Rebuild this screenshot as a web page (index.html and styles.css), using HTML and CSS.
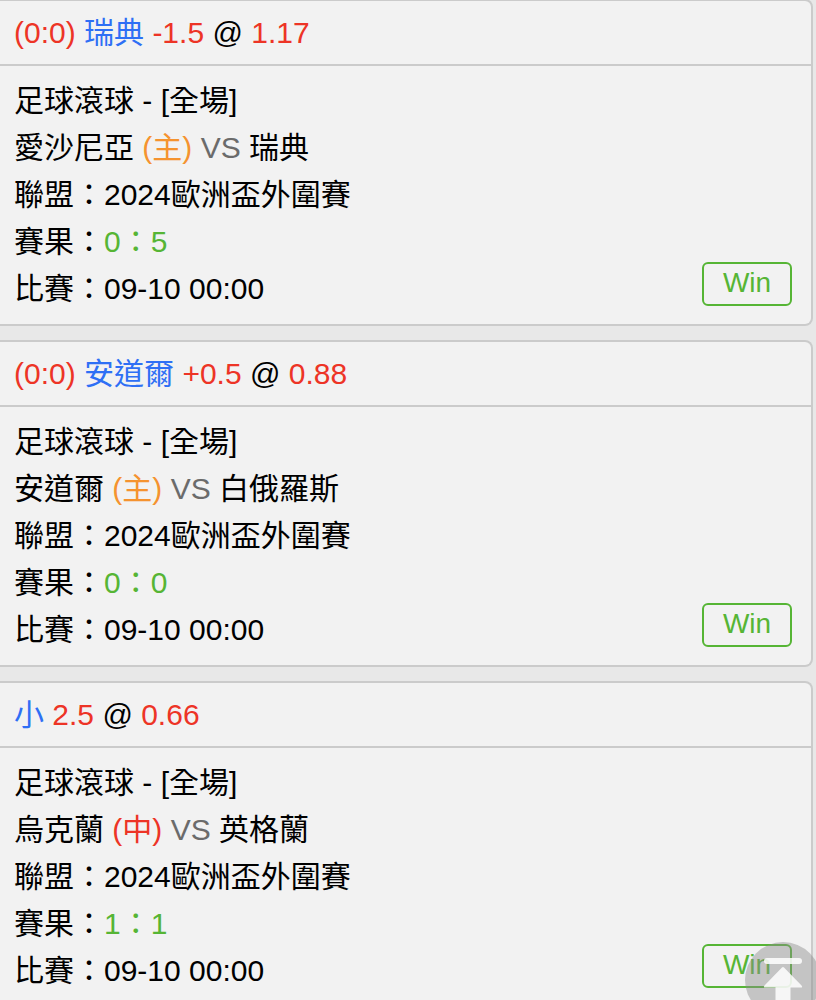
FILE: index.html
```html
<!DOCTYPE html>
<html lang="zh-Hant">
<head>
<meta charset="UTF-8">
<meta name="viewport" content="width=device-width, initial-scale=1.0">
<title>投注記錄</title>
<link rel="stylesheet" href="styles.css">
</head>
<body>
<div class="list">
    <div class="card">
        <div class="card-head">
            <span class="red">(0:0)</span> <span class="blue">瑞典</span> <span class="red">-1.5</span> @ <span class="red">1.17</span>
        </div>
        <div class="card-body">
            <div class="info">
                <p>足球滾球 - [全場]</p>
                <p>愛沙尼亞 <span class="orange">(主)</span> <span class="gray">VS</span> 瑞典</p>
                <p>聯盟：2024歐洲盃外圍賽</p>
                <p>賽果：<span class="green">0：5</span></p>
                <p>比賽：09-10 00:00</p>
            </div>
            <span class="tag">Win</span>
        </div>
    </div>

    <div class="card">
        <div class="card-head">
            <span class="red">(0:0)</span> <span class="blue">安道爾</span> <span class="red">+0.5</span> @ <span class="red">0.88</span>
        </div>
        <div class="card-body">
            <div class="info">
                <p>足球滾球 - [全場]</p>
                <p>安道爾 <span class="orange">(主)</span> <span class="gray">VS</span> 白俄羅斯</p>
                <p>聯盟：2024歐洲盃外圍賽</p>
                <p>賽果：<span class="green">0：0</span></p>
                <p>比賽：09-10 00:00</p>
            </div>
            <span class="tag">Win</span>
        </div>
    </div>

    <div class="card">
        <div class="card-head">
            <span class="blue">小</span> <span class="red">2.5</span> @ <span class="red">0.66</span>
        </div>
        <div class="card-body">
            <div class="info">
                <p>足球滾球 - [全場]</p>
                <p>烏克蘭 <span class="red">(中)</span> <span class="gray">VS</span> 英格蘭</p>
                <p>聯盟：2024歐洲盃外圍賽</p>
                <p>賽果：<span class="green">1：1</span></p>
                <p>比賽：09-10 00:00</p>
            </div>
            <span class="tag">Win</span>
        </div>
    </div>
</div>

<button class="go-top" type="button" aria-label="回到頂部" onclick="window.scrollTo(0, 0)">
    <svg viewBox="0 0 76 76" width="76" height="76" fill="#fff" fill-opacity="0.85">
        <rect x="19" y="16" width="38" height="6" rx="3"/>
        <path d="M37 25.500Q38 24.500 39 25.500L56.500 43.500Q58 45.500 56 45.500H45.500V64H30.500V45.500H20Q18 45.500 19.500 43.500Z"/>
    </svg>
</button>
</body>
</html>
```

FILE: styles.css
```css
* {
    box-sizing: border-box;
}

html {
    scrollbar-width: none;
}

body {
    margin: 0;
    background: #e8e8e8;
    color: #000;
    font-family: "Liberation Sans", "Noto Sans CJK TC", sans-serif;
    font-size: 30px;
    line-height: 47px;
}

.list {
    display: flex;
    flex-direction: column;
    gap: 14px;
    margin-top: -1px;
    padding-right: 3px;
}

.card {
    background: #f2f2f2;
    border: 2px solid #cbcbcb;
    border-left: 0;
    border-radius: 0 8px 8px 0;
}

.card-head {
    padding: 8px 14px;
    border-bottom: 2px solid #cbcbcb;
}

.card-body {
    display: flex;
    justify-content: space-between;
    align-items: flex-end;
    padding: 11px 19px 12px 14px;
}

.info p {
    margin: 0;
}

.tag {
    width: 90px;
    margin-bottom: 6px;
    padding-bottom: 2px;
    border: 2px solid #56b535;
    border-radius: 6px;
    color: #56b535;
    font-size: 28px;
    line-height: 38px;
    text-align: center;
}

.red {
    color: #ed3426;
}

.blue {
    color: #2e6ff5;
}

.orange {
    color: #f5932f;
}

.gray {
    color: #6b6b6b;
}

.green {
    color: #56b535;
}

.go-top {
    position: fixed;
    right: -5px;
    bottom: -18px;
    width: 76px;
    height: 76px;
    padding: 0;
    border: 0;
    border-radius: 50%;
    background: rgba(140, 140, 140, 0.45);
    cursor: pointer;
}
```
